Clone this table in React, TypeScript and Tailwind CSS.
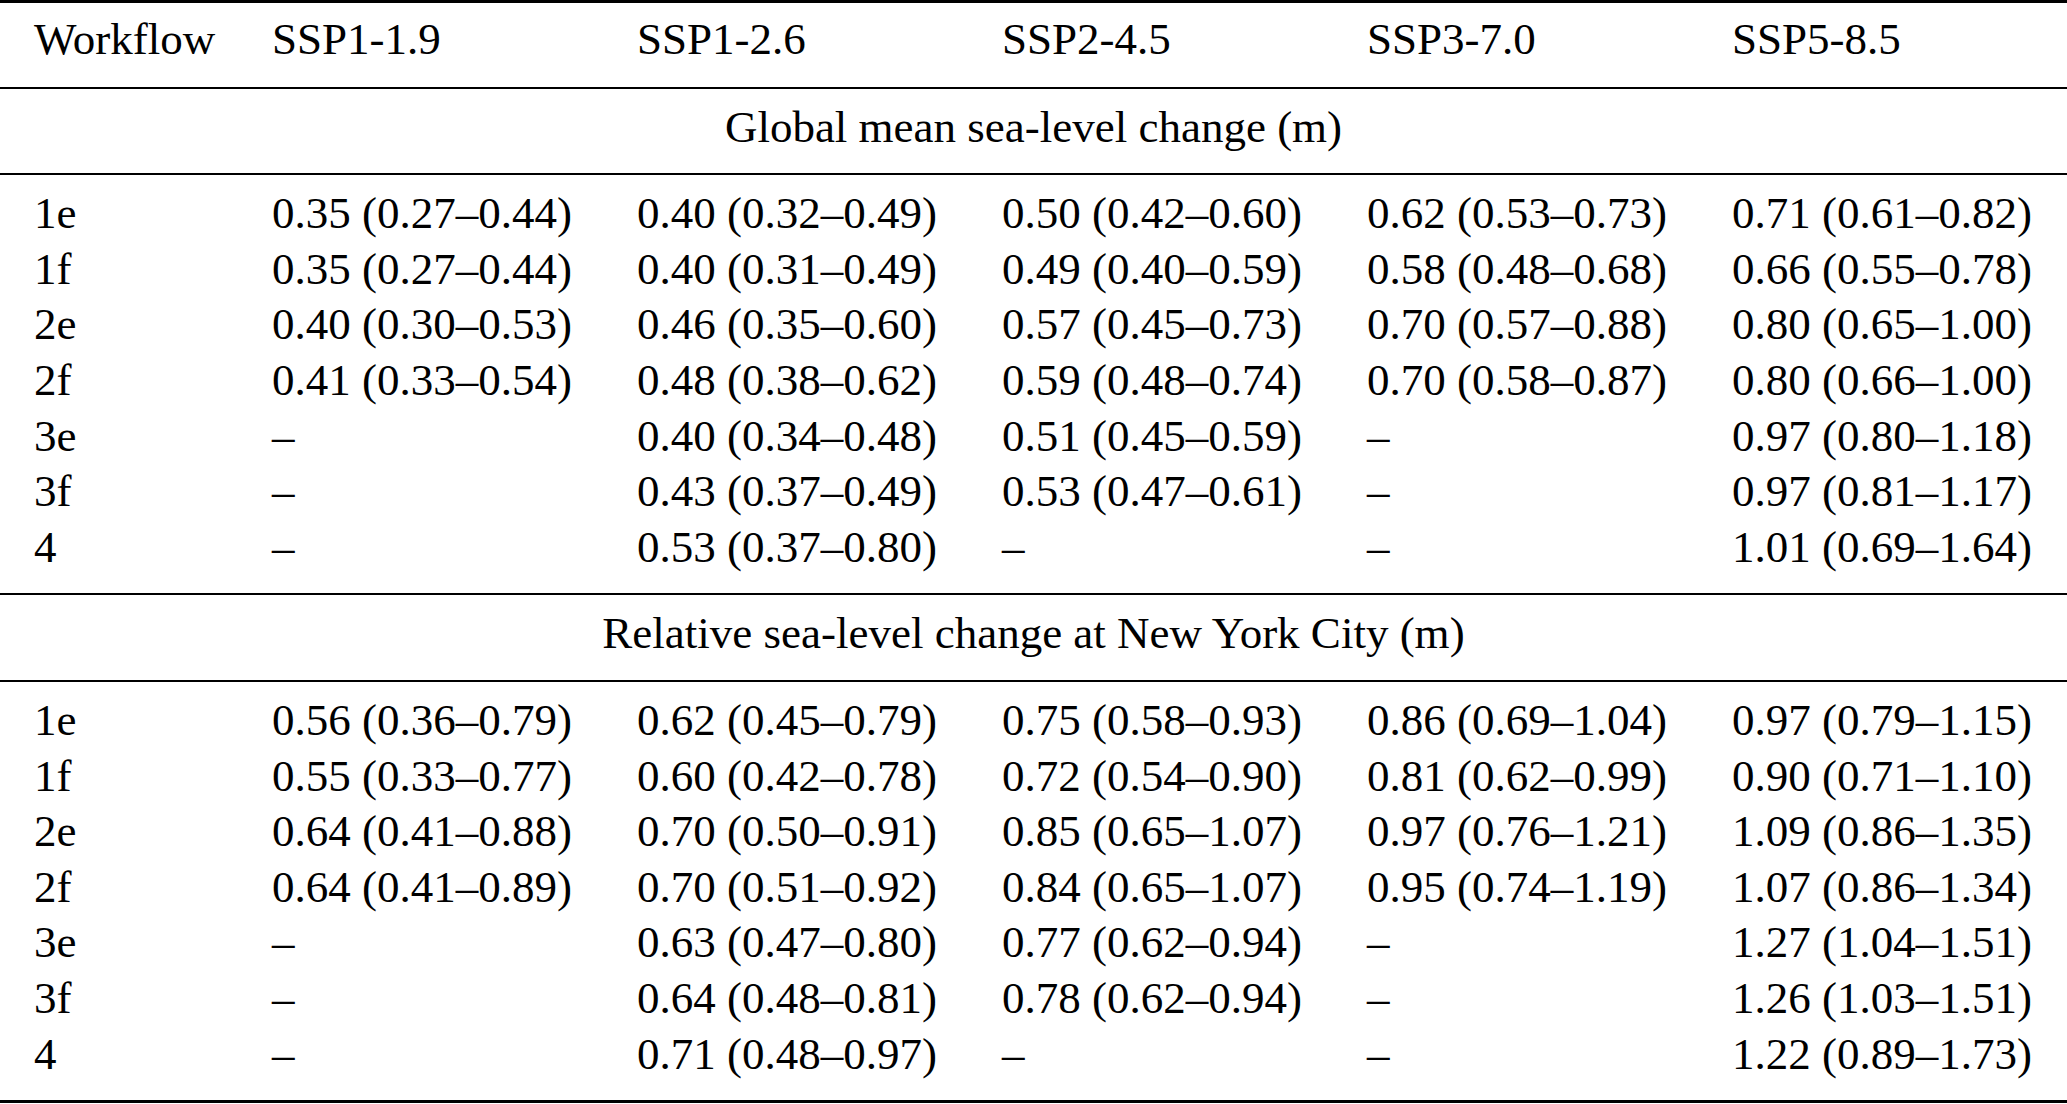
const scenarios = ["SSP1-1.9", "SSP1-2.6", "SSP2-4.5", "SSP3-7.0", "SSP5-8.5"];

type Row = { wf: string; vals: string[] };

const globalRows: Row[] = [
  { wf: "1e", vals: ["0.35 (0.27–0.44)", "0.40 (0.32–0.49)", "0.50 (0.42–0.60)", "0.62 (0.53–0.73)", "0.71 (0.61–0.82)"] },
  { wf: "1f", vals: ["0.35 (0.27–0.44)", "0.40 (0.31–0.49)", "0.49 (0.40–0.59)", "0.58 (0.48–0.68)", "0.66 (0.55–0.78)"] },
  { wf: "2e", vals: ["0.40 (0.30–0.53)", "0.46 (0.35–0.60)", "0.57 (0.45–0.73)", "0.70 (0.57–0.88)", "0.80 (0.65–1.00)"] },
  { wf: "2f", vals: ["0.41 (0.33–0.54)", "0.48 (0.38–0.62)", "0.59 (0.48–0.74)", "0.70 (0.58–0.87)", "0.80 (0.66–1.00)"] },
  { wf: "3e", vals: ["–", "0.40 (0.34–0.48)", "0.51 (0.45–0.59)", "–", "0.97 (0.80–1.18)"] },
  { wf: "3f", vals: ["–", "0.43 (0.37–0.49)", "0.53 (0.47–0.61)", "–", "0.97 (0.81–1.17)"] },
  { wf: "4", vals: ["–", "0.53 (0.37–0.80)", "–", "–", "1.01 (0.69–1.64)"] },
];

const nycRows: Row[] = [
  { wf: "1e", vals: ["0.56 (0.36–0.79)", "0.62 (0.45–0.79)", "0.75 (0.58–0.93)", "0.86 (0.69–1.04)", "0.97 (0.79–1.15)"] },
  { wf: "1f", vals: ["0.55 (0.33–0.77)", "0.60 (0.42–0.78)", "0.72 (0.54–0.90)", "0.81 (0.62–0.99)", "0.90 (0.71–1.10)"] },
  { wf: "2e", vals: ["0.64 (0.41–0.88)", "0.70 (0.50–0.91)", "0.85 (0.65–1.07)", "0.97 (0.76–1.21)", "1.09 (0.86–1.35)"] },
  { wf: "2f", vals: ["0.64 (0.41–0.89)", "0.70 (0.51–0.92)", "0.84 (0.65–1.07)", "0.95 (0.74–1.19)", "1.07 (0.86–1.34)"] },
  { wf: "3e", vals: ["–", "0.63 (0.47–0.80)", "0.77 (0.62–0.94)", "–", "1.27 (1.04–1.51)"] },
  { wf: "3f", vals: ["–", "0.64 (0.48–0.81)", "0.78 (0.62–0.94)", "–", "1.26 (1.03–1.51)"] },
  { wf: "4", vals: ["–", "0.71 (0.48–0.97)", "–", "–", "1.22 (0.89–1.73)"] },
];

const gridCols = "grid grid-cols-[238px_365px_365px_365px_365px_1fr] pl-[34px]";

const SectionTitle = ({ title }: { title: string }) => (
  <div className="pt-[11px] pb-[18px] text-center border-b-2 border-black">{title}</div>
);

const DataBlock = ({ rows, last }: { rows: Row[]; last?: boolean }) => (
  <div className={last ? "pt-[11px] pb-[18px]" : "pt-[11px] pb-[18px] border-b-2 border-black"}>
    {rows.map((row) => (
      <div key={row.wf} className={gridCols}>
        <div>{row.wf}</div>
        {row.vals.map((v, i) => (
          <div key={i} className="whitespace-nowrap">{v}</div>
        ))}
      </div>
    ))}
  </div>
);

export default function App() {
  return (
    <div className="w-[2067px] h-[1104px] bg-white text-black font-['Liberation_Serif']">
      <div className="border-t-[3px] border-b-[3px] border-black text-[45px] leading-[55.6px]">
        <div className={`${gridCols} pt-[9px] pb-[19px] border-b-2 border-black`}>
          <div>Workflow</div>
          {scenarios.map((s) => (
            <div key={s}>{s}</div>
          ))}
        </div>

        <SectionTitle title="Global mean sea-level change (m)" />
        <DataBlock rows={globalRows} />

        <SectionTitle title="Relative sea-level change at New York City (m)" />
        <DataBlock rows={nycRows} last />
      </div>
    </div>
  );
}
